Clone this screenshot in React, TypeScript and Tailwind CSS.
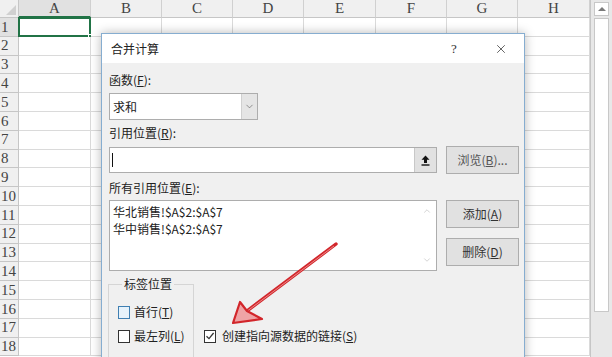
import { ChevronDown, ChevronUp, X } from 'lucide-react';

const COLS = [
  { name: 'A', w: 'w-[72px]' },
  { name: 'B', w: 'w-[71px]' },
  { name: 'C', w: 'w-[71px]' },
  { name: 'D', w: 'w-[71px]' },
  { name: 'E', w: 'w-[72px]' },
  { name: 'F', w: 'w-[71px]' },
  { name: 'G', w: 'w-[71px]' },
  { name: 'H', w: 'w-[72px]' },
];

const ROWS = Array.from({ length: 18 }, (_, i) => i + 1);

function Sheet() {
  return (
    <div className="flex h-full font-['Liberation_Serif',serif] text-[#444]">
      <div className="flex flex-col">
        {/* Column headers */}
        <div className="flex h-[18px]">
          <div className="relative w-[19px] h-full bg-[#f0f0f0] border-r border-b border-[#c6c6c6] overflow-hidden">
            <div className="absolute right-[2px] bottom-[2px] w-0 h-0 border-l-[10px] border-l-transparent border-b-[10px] border-b-[#d0d0d0]" />
          </div>
          {COLS.map((c, i) => (
            <div
              key={c.name}
              className={`${c.w} h-full flex items-center justify-center text-[15px] border-r border-[#d0d0d0] ${
                i === 0 ? 'bg-[#e1e1e1] border-b-2 border-b-[#217346]' : 'bg-[#f0f0f0] border-b border-b-[#c6c6c6]'
              }`}
            >
              {c.name}
            </div>
          ))}
        </div>
        {/* Rows */}
        {ROWS.map((r) => (
          <div key={r} className="flex h-[18.8px]">
            <div
              className={`w-[19px] h-full flex items-center pl-[1px] text-[15px] border-r border-b border-[#c6c6c6] ${
                r === 1 ? 'bg-[#e1e1e1]' : 'bg-[#f0f0f0]'
              }`}
            >
              {r}
            </div>
            {COLS.map((c, i) => (
              <div
                key={c.name}
                className={`relative ${c.w} h-full bg-white border-r border-b border-[#dadada]`}
              >
                {r === 1 && i === 0 && (
                  <>
                    <div className="absolute -left-px -top-px right-[-1px] bottom-[-1px] border-2 border-[#217346]" />
                    <div className="absolute right-[-3px] bottom-[-3px] w-[5px] h-[5px] bg-[#217346] border border-white" />
                  </>
                )}
              </div>
            ))}
          </div>
        ))}
      </div>
      {/* Vertical scrollbar */}
      <div className="w-[22px] h-full bg-[#e8e8e8] border-l border-[#c6c6c6] flex flex-col items-center pt-[2px] gap-[2px]">
        <div className="w-[15px] h-[14px] bg-white border border-[#c8c8c8] flex items-center justify-center">
          <div className="w-0 h-0 border-l-[4px] border-l-transparent border-r-[4px] border-r-transparent border-b-[4px] border-b-[#7a7a7a]" />
        </div>
        <div className="w-[15px] h-[294px] bg-white border border-[#c8c8c8]" />
      </div>
    </div>
  );
}

function Check({ checked, focus }: { checked?: boolean; focus?: boolean }) {
  return (
    <div
      className={`w-[12px] h-[13px] flex items-center justify-center border ${
        focus ? 'border-[#3f7fb2] bg-[#e6f2fb]' : 'border-[#333] bg-white'
      }`}
    >
      {checked && (
        <svg width="10" height="10" viewBox="0 0 10 10">
          <path d="M1.5 5.2 L4 7.6 L8.6 2" fill="none" stroke="#333" strokeWidth="1.3" />
        </svg>
      )}
    </div>
  );
}

function Btn({ children, dim }: { children: React.ReactNode; dim?: boolean }) {
  return (
    <div
      className={`w-[73px] h-[28px] flex items-center justify-center bg-[#e1e1e1] border border-[#adadad] text-[12px] ${
        dim ? 'text-[#555]' : 'text-[#333]'
      }`}
    >
      {children}
    </div>
  );
}

function Dialog() {
  return (
    <div className="absolute left-[101px] top-[33px] w-[424px] h-[340px] bg-[#f0f0f0] border border-[#86add0] shadow-[0_0_10px_rgba(0,0,0,0.28)] font-['Noto_Sans_CJK_SC','Microsoft_YaHei',sans-serif] text-[12px] leading-[16px] text-[#222]">
      {/* Title bar */}
      <div className="h-[29px] bg-white flex items-center pl-[9px]">
        <span className="flex-1">合并计算</span>
        <span className="w-[12px] text-center text-[13px] text-[#333] font-['Liberation_Serif',serif]">?</span>
        <X size={14} strokeWidth={1.3} className="ml-[34px] mr-[16px] text-[#333]" />
      </div>

      <div className="pl-[6px]">
        <div className="mt-[9px] pl-px">
          函数(<u>F</u>):
        </div>
        <div className="mt-[5px] w-[149px] h-[27px] ml-px flex bg-white border border-[#adadad]">
          <div className="flex-1 flex items-center pl-[3px]">求和</div>
          <div className="w-[16px] h-full bg-[#e5e5e5] border-l border-[#d0d0d0] flex items-center justify-center">
            <ChevronDown size={11} strokeWidth={1.3} className="text-[#555]" />
          </div>
        </div>

        <div className="mt-[5px] pl-px">
          引用位置(<u>R</u>):
        </div>
        <div className="mt-[5px] flex items-center">
          <div className="ml-px w-[328px] h-[26px] flex bg-white border border-[#adadad]">
            <div className="flex-1 flex items-center pl-[2px]">
              <div className="w-px h-[14px] bg-[#111]" />
            </div>
            <div className="w-[22px] h-full bg-[#e1e1e1] border-l border-[#c8c8c8] flex items-center justify-center">
              <svg width="9" height="11" viewBox="0 0 9 11">
                <path d="M4.5 0.5 L8.5 4.8 L6 4.8 L6 8 L3 8 L3 4.8 L0.5 4.8 Z" fill="#111" />
                <rect x="0.5" y="9.3" width="8" height="1.4" fill="#111" />
              </svg>
            </div>
          </div>
          <div className="ml-[9px]">
            <Btn dim>
              浏览(<u>B</u>)...
            </Btn>
          </div>
        </div>

        <div className="mt-[6px] pl-px">
          所有引用位置(<u>E</u>):
        </div>
        <div className="mt-[4px] flex items-start">
          <div className="ml-px w-[328px] h-[71px] flex bg-white border border-[#adadad]">
            <div className="flex-1 pl-[3px] pt-[3px] leading-[16.5px]">
              <div>华北销售!$A$2:$A$7</div>
              <div>华中销售!$A$2:$A$7</div>
            </div>
            <div className="w-[18px] h-full flex flex-col items-center justify-between py-[5px] text-[#b5b5b5]">
              <ChevronUp size={10} strokeWidth={1.4} />
              <ChevronDown size={10} strokeWidth={1.4} />
            </div>
          </div>
          <div className="ml-[9px] flex flex-col gap-[10px]">
            <Btn>
              添加(<u>A</u>)
            </Btn>
            <Btn>
              删除(<u>D</u>)
            </Btn>
          </div>
        </div>

        <div className="mt-[5px] flex items-start">
          <fieldset className="w-[86px] border border-[#d5d5d5] pl-[9px] pb-[16px]">
            <legend className="ml-[4px] px-[2px]">标签位置</legend>
            <div className="mt-[12px] flex items-center gap-[4px] h-[16px]">
              <Check focus />
              <span>
                首行(<u>T</u>)
              </span>
            </div>
            <div className="mt-[8px] flex items-center gap-[4px] h-[16px]">
              <Check />
              <span>
                最左列(<u>L</u>)
              </span>
            </div>
          </fieldset>
          <div className="ml-[10px] mt-[52px] flex items-center gap-[6px] h-[16px]">
            <Check checked />
            <span>
              创建指向源数据的链接(<u>S</u>)
            </span>
          </div>
        </div>
      </div>
    </div>
  );
}

export default function App() {
  return (
    <div className="relative w-[612px] h-[357px] overflow-hidden bg-white">
      <Sheet />
      <Dialog />
      {/* Red annotation arrow */}
      <svg className="absolute left-0 top-0 pointer-events-none" width="612" height="357" viewBox="0 0 612 357">
        <line x1="336" y1="244" x2="243" y2="314" stroke="#d2262b" strokeWidth="3.4" strokeLinecap="round" />
        <line x1="334" y1="246" x2="246" y2="312" stroke="#f2a3a3" strokeWidth="0.8" />
        <path d="M233 323 L240 302 L247 311 L262 319 Z" fill="#efa3a5" stroke="#d2262b" strokeWidth="2.2" strokeLinejoin="round" />
      </svg>
    </div>
  );
}
